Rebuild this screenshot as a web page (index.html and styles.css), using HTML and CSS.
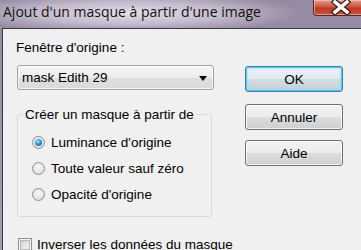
FILE: index.html
```html
<!DOCTYPE html>
<html lang="fr">
<head>
  <meta charset="UTF-8" />
  <title>Ajout d'un masque à partir d'une image</title>
  <link rel="stylesheet" href="styles.css">
</head>
<body>

  <div class="window">
    <div class="titlebar">
      <span class="title">Ajout d'un masque à partir d'une image</span>
      <span class="close-btn">
        <svg width="20" height="15" viewBox="0 0 20 15">
          <path d="M4 2 L16 12 M16 2 L4 12" stroke="#3b1d1a" stroke-width="6" stroke-linecap="square"/>
          <path d="M4 2 L16 12 M16 2 L4 12" stroke="#fff" stroke-width="3.5" stroke-linecap="square"/>
        </svg>
      </span>
    </div>

    <div class="client">
      <div class="main-row">
        <div class="left-col">
          <div class="field-label">Fenêtre d'origine :</div>
          <div class="select">
            <span>mask Edith 29</span>
            <span class="arrow"></span>
          </div>

          <fieldset class="group">
            <legend>Créer un masque à partir de</legend>
            <div class="radio-row">
              <span class="radio checked"></span>
              <span>Luminance d'origine</span>
            </div>
            <div class="radio-row">
              <span class="radio"></span>
              <span>Toute valeur sauf zéro</span>
            </div>
            <div class="radio-row">
              <span class="radio"></span>
              <span>Opacité d'origine</span>
            </div>
          </fieldset>
        </div>

        <div class="right-col">
          <button class="btn default">OK</button>
          <button class="btn">Annuler</button>
          <button class="btn last">Aide</button>
        </div>
      </div>

      <div class="check-row">
        <span class="checkbox"></span>
        <span>Inverser les données du masque</span>
      </div>
    </div>
  </div>

</body>
</html>
```

FILE: styles.css
```css
* { box-sizing: border-box; }

body {
  margin: 0;
  background: #9e92aa;
  font-family: 'Liberation Sans', Arial, sans-serif;
  font-size: 13.5px;
  color: #000;
}

.window {
  width: 361px;
  height: 250px;
  overflow: hidden;
  background: linear-gradient(#968aa2, #a69bb0);
}

/* Title bar */
.titlebar {
  height: 28px;
  display: flex;
  align-items: flex-start;
  background:
    radial-gradient(ellipse 170px 20px at 130px 13px, rgba(232,226,236,0.95) 0%, rgba(214,206,222,0.7) 55%, rgba(170,160,182,0) 100%);
}

.title {
  font-family: 'Open Sans', sans-serif;
  font-size: 14px;
  line-height: 16px;
  margin: 4px 0 0 3px;
  color: #111;
}

.close-btn {
  margin-left: auto;
  margin-right: -12px;
  width: 60px;
  height: 16px;
  display: flex;
  justify-content: center;
  align-items: center;
  padding-right: 4px;
  border: 1px solid #4a2a2e;
  border-top: none;
  border-radius: 0 0 0 4px;
  background: linear-gradient(#e19a88 0%, #d4664f 35%, #c0392a 55%, #c8503a 100%);
  box-shadow: inset 0 0 0 1px rgba(255,220,210,0.5);
}

/* Client area */
.client {
  margin-left: 2px;
  height: 222px;
  background: #f0f0f0;
  border-left: 1px solid #3d3447;
  border-top: 1px solid #3d3447;
  padding: 11px 0 0 13px;
}

.main-row {
  display: flex;
}

.left-col {
  width: 198px;
}

.field-label {
  line-height: 15px;
}

.select {
  margin: 10px 0 0 1px;
  width: 197px;
  height: 25px;
  border: 1px solid #a3a3a3;
  border-radius: 3px;
  background: linear-gradient(#f4f4f4 0%, #ececec 50%, #dfdfdf 51%, #d9d9d9 100%);
  box-shadow: inset 0 0 0 1px rgba(255,255,255,0.7);
  display: flex;
  align-items: center;
  justify-content: space-between;
  padding: 0 5px 0 4px;
}

.arrow {
  width: 0;
  height: 0;
  margin-right: 1px;
  margin-top: 1px;
  border-left: 4px solid transparent;
  border-right: 4px solid transparent;
  border-top: 5px solid #000;
}

/* Group box */
.group {
  margin: 17px 0 0 1px;
  width: 195px;
  padding: 7px 0 9px 0;
  border: 1px solid #d5dadd;
  border-radius: 3px;
  min-inline-size: 0;
}

.group legend {
  margin-left: 5px;
  padding: 0 2px;
  line-height: 15px;
}

.radio-row {
  height: 26px;
  display: flex;
  align-items: center;
  gap: 6px;
  padding-left: 14px;
}

.radio {
  width: 13px;
  height: 13px;
  border-radius: 50%;
  border: 1px solid #8d8f90;
  background: radial-gradient(circle at 50% 40%, #f8f8f8 0%, #e4e4e4 60%, #cfcfcf 100%);
  display: flex;
  align-items: center;
  justify-content: center;
}

.radio.checked::after {
  content: '';
  width: 7px;
  height: 7px;
  border-radius: 50%;
  background: radial-gradient(circle at 40% 35%, #b8ecff 0%, #37a7e6 35%, #0a4a8f 100%);
}

/* Buttons */
.right-col {
  margin-left: 31px;
  padding-top: 26px;
  display: flex;
  flex-direction: column;
}

.btn {
  width: 98px;
  height: 26px;
  margin-bottom: 12px;
  font-family: 'Liberation Sans', Arial, sans-serif;
  font-size: 13.5px;
  color: #000;
  border: 1px solid #707070;
  border-radius: 3px;
  background: linear-gradient(#f2f2f2 0%, #ebebeb 50%, #dddddd 51%, #cfcfcf 100%);
  box-shadow: inset 0 0 0 1px rgba(255,255,255,0.75);
  padding: 0;
}

.btn + .btn.last {
  margin-top: -2px;
}

.btn.default {
  border-color: #3c7fb1;
  background: linear-gradient(#eaf2f7 0%, #e2eaf0 50%, #d1dbe2 51%, #c7d2da 100%);
  box-shadow: inset 0 0 0 1px #52c7f5, inset 0 0 2px 2px rgba(120,210,245,0.35);
}

/* Checkbox */
.check-row {
  margin-top: 20px;
  display: flex;
  align-items: center;
  gap: 5px;
  padding-left: 2px;
}

.checkbox {
  width: 14px;
  height: 14px;
  border: 1px solid #8e8f8f;
  background: linear-gradient(135deg, #c8c8c8 0%, #e8e8e8 60%, #f8f8f8 100%);
  box-shadow: inset 0 0 0 1px #f4f4f4, inset 0 0 0 2px #b8b8b8;
}
```
